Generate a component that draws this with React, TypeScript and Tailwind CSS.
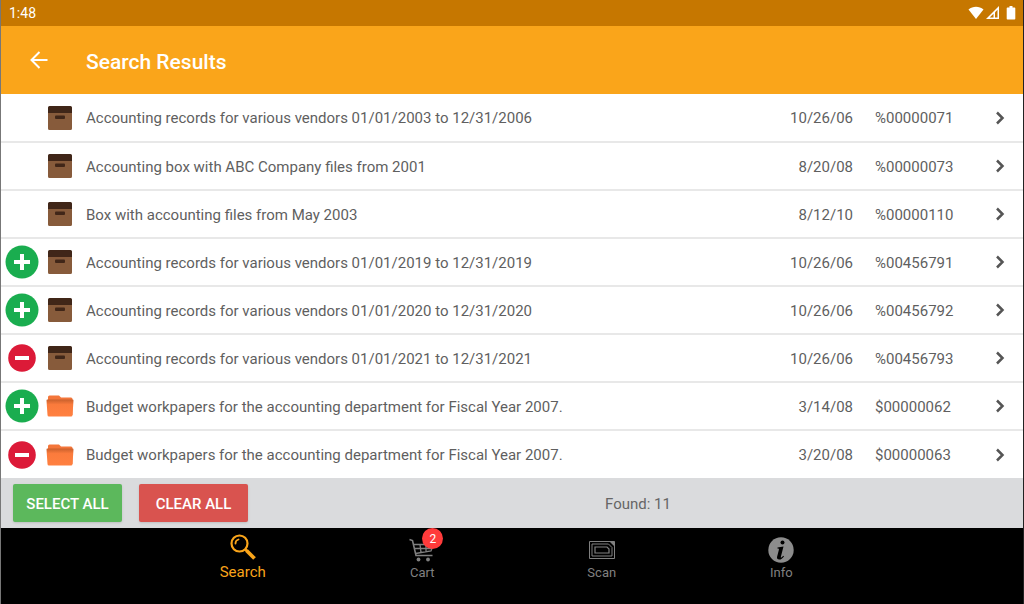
import React from "react";

type Kind = "box" | "folder";
type Action = "add" | "remove" | null;

interface Result {
  title: string;
  date: string;
  code: string;
  kind: Kind;
  action: Action;
}

const results: Result[] = [
  { title: "Accounting records for various vendors 01/01/2003 to 12/31/2006", date: "10/26/06", code: "%00000071", kind: "box", action: null },
  { title: "Accounting box with ABC Company files from 2001", date: "8/20/08", code: "%00000073", kind: "box", action: null },
  { title: "Box with accounting files from May 2003", date: "8/12/10", code: "%00000110", kind: "box", action: null },
  { title: "Accounting records for various vendors 01/01/2019 to 12/31/2019", date: "10/26/06", code: "%00456791", kind: "box", action: "add" },
  { title: "Accounting records for various vendors 01/01/2020 to 12/31/2020", date: "10/26/06", code: "%00456792", kind: "box", action: "add" },
  { title: "Accounting records for various vendors 01/01/2021 to 12/31/2021", date: "10/26/06", code: "%00456793", kind: "box", action: "remove" },
  { title: "Budget workpapers for the accounting department for Fiscal Year 2007.", date: "3/14/08", code: "$00000062", kind: "folder", action: "add" },
  { title: "Budget workpapers for the accounting department for Fiscal Year 2007.", date: "3/20/08", code: "$00000063", kind: "folder", action: "remove" },
];

function BoxIcon() {
  return (
    <svg width="26" height="26" viewBox="0 0 26 26" aria-hidden="true">
      <path d="M1 6h24v17.500a1.500 1.500 0 0 1-1.500 1.500h-21a1.500 1.500 0 0 1-1.500-1.500z" fill="#875b3b" />
      <path d="M2.500 1h21a1.500 1.500 0 0 1 1.500 1.500V8H1V2.500A1.500 1.500 0 0 1 2.500 1z" fill="#402618" />
      <rect x="8" y="10.500" width="10" height="3.500" rx="1" fill="#402618" />
    </svg>
  );
}

function FolderIcon() {
  return (
    <svg width="28" height="22" viewBox="0 0 28 22" aria-hidden="true">
      <defs>
        <linearGradient id="folder-front" x1="0" y1="0" x2="0" y2="1">
          <stop offset="0" stopColor="#c9602c" />
          <stop offset="0.300" stopColor="#fb7b3c" />
          <stop offset="1" stopColor="#ff8040" />
        </linearGradient>
      </defs>
      <path d="M2 20V2a1.500 1.500 0 0 1 1.500-1.500H13L15 2.500h10a1.500 1.500 0 0 1 1.500 1.500v16z" fill="#f4763a" />
      <path d="M1.500 4.500h25a1 1 0 0 1 1 1.100L26.500 20a1.500 1.500 0 0 1-1.500 1.500H3A1.500 1.500 0 0 1 1.500 20L.5 5.600a1 1 0 0 1 1-1.100z" fill="url(#folder-front)" />
    </svg>
  );
}

function AddIcon() {
  return (
    <svg width="34" height="34" viewBox="0 0 34 34" aria-hidden="true">
      <circle cx="17" cy="17" r="16.500" fill="#1aad4f" />
      <path d="M17 9v16M9 17h16" stroke="#fff" strokeWidth="4" />
    </svg>
  );
}

function RemoveIcon() {
  return (
    <svg width="28" height="28" viewBox="0 0 28 28" aria-hidden="true">
      <circle cx="14" cy="14" r="13.800" fill="#dc1a38" />
      <path d="M7 14h14" stroke="#fff" strokeWidth="4" />
    </svg>
  );
}

function StatusIcons() {
  return (
    <svg width="48" height="16" viewBox="0 0 48 16" aria-hidden="true">
      <path d="M0.500 4.500C4.800 0.900 11.200 0.900 15.500 4.500L8 14z" fill="#fff" />
      <path d="M31 1v13H18z" fill="#fff" />
      <path d="M29.500 4.700v7.800h-2.500V7.200z" fill="#c67700" />
      <path d="M25.500 8.700v3.800h-3.800z" fill="#c67700" />
      <path d="M39.500 2.500h2V1h3v1.500h2a.8.8 0 0 1 .8.800v10.400a.8.800 0 0 1-.8.800h-7a.8.800 0 0 1-.8-.800V3.300a.8.800 0 0 1 .8-.800z" fill="#fff" />
    </svg>
  );
}

function SearchIcon() {
  return (
    <svg width="26" height="26" viewBox="0 0 26 26" fill="none" stroke="currentColor" aria-hidden="true">
      <circle cx="9.500" cy="9.500" r="8" strokeWidth="2.200" />
      <path d="M15 15l2 2" strokeWidth="2.500" />
      <path d="M16.500 16.500l8 8" strokeWidth="3.800" />
      <path d="M5.500 9.500a4 4 0 0 1 3-4" strokeWidth="1.800" strokeLinecap="round" />
    </svg>
  );
}

function CartIcon() {
  return (
    <svg width="26" height="24" viewBox="0 0 26 24" fill="none" stroke="currentColor" aria-hidden="true">
      <path d="M.5 1.500l3 1 3.500 15h16.500" strokeWidth="1.600" />
      <path d="M4.500 6.500h20l-2.500 6.500-15.500 2.500M5.500 10.500h17.500M11 6.500l1 8M17 6.500v7" strokeWidth="1.300" />
      <circle cx="9.500" cy="21.500" r="1.900" fill="currentColor" stroke="none" />
      <circle cx="19" cy="21.500" r="1.900" fill="currentColor" stroke="none" />
    </svg>
  );
}

function ScanIcon() {
  return (
    <svg width="26" height="18" viewBox="0 0 26 18" fill="none" stroke="currentColor" aria-hidden="true">
      <path d="M.5.5h25v17H.5z" />
      <path d="M3 3h16.500l3.500 3.500V15H3z" />
      <path d="M6 6h12l2 2v4H6z" strokeWidth="1.200" />
      <path d="M20.500.5h5v5z" fill="currentColor" stroke="none" />
    </svg>
  );
}

function InfoIcon() {
  return (
    <svg width="26" height="26" viewBox="0 0 26 26" aria-hidden="true">
      <circle cx="13" cy="13" r="12.700" fill="#8c8c8c" />
      <circle cx="14.500" cy="5.500" r="2" fill="#000" />
      <path d="M9.500 10.500l6-1-2.700 10.500c-.2 1 .6.900 2.500-1.200l.7.600c-1.500 2-3 3.100-4.700 3.100-2 0-2.600-1.100-2.200-2.700l1.800-7c.2-.9-.2-1.300-1.500-1.300z" fill="#000" />
    </svg>
  );
}

const navItems = [
  { label: "Search", Icon: SearchIcon, active: true, badge: 0 },
  { label: "Cart", Icon: CartIcon, active: false, badge: 2 },
  { label: "Scan", Icon: ScanIcon, active: false, badge: 0 },
  { label: "Info", Icon: InfoIcon, active: false, badge: 0 },
];

export default function App() {
  return (
    <div className="flex min-h-screen flex-col border-x border-r-[#222222] border-l-[#777777] bg-black font-['Roboto',sans-serif]">
      <div className="flex h-[26px] items-center justify-between bg-[#c67700] pr-[7px] pl-2 text-sm text-white">
        <span>1:48</span>
        <StatusIcons />
      </div>

      <header className="flex h-[68px] items-center bg-[#faa51a] text-white">
        <button type="button" aria-label="Back" className="ml-6 flex h-8 w-7 items-center justify-center">
          <svg width="18" height="18" viewBox="0 0 18 18" fill="none" stroke="currentColor" strokeWidth="2" aria-hidden="true">
            <path d="M17.500 9H2M9.500 1L1.500 9l8 8" />
          </svg>
        </button>
        <h1 className="ml-[33px] pt-1 text-[21px] leading-7 font-medium">Search Results</h1>
      </header>

      <main className="bg-white">
        <table className="w-full table-fixed border-collapse text-[15px] text-[#5f5f5f]">
          <colgroup>
            <col className="w-[42px]" />
            <col className="w-[43px]" />
            <col />
            <col className="w-[100px]" />
            <col className="w-[124px]" />
            <col className="w-[46px]" />
          </colgroup>
          <tbody>
            {results.map((item) => (
              <tr key={item.code} className="h-12 border-b-2 border-[#e8e8e8] last:border-b-0">
                <td className="p-0">
                  {item.action && (
                    <button type="button" aria-label={item.action === "add" ? "Add to cart" : "Remove from cart"} className="flex w-full items-center justify-center">
                      {item.action === "add" ? <AddIcon /> : <RemoveIcon />}
                    </button>
                  )}
                </td>
                <td className="p-0">
                  <div className="flex w-[34px] justify-center">{item.kind === "box" ? <BoxIcon /> : <FolderIcon />}</div>
                </td>
                <td className="truncate p-0 pt-0.5">{item.title}</td>
                <td className="p-0 pt-0.5 text-right">{item.date}</td>
                <td className="p-0 pt-0.5 pl-[22px]">{item.code}</td>
                <td className="p-0">
                  <button type="button" aria-label="Open" className="flex w-full items-center justify-center">
                    <svg width="10" height="14" viewBox="0 0 10 14" fill="none" stroke="#555555" strokeWidth="2.500" aria-hidden="true">
                      <path d="M2 1.500L7.500 7 2 12.500" />
                    </svg>
                  </button>
                </td>
              </tr>
            ))}
          </tbody>
        </table>
      </main>

      <div className="grid h-[50px] grid-cols-[1fr_auto_1fr] items-center bg-[#dadbdd] px-3 text-[15px]">
        <div className="flex gap-[17px]">
          <button type="button" className="h-[38px] w-[109px] rounded-xs bg-[#5cb85c] pt-0.5 font-medium text-white shadow-sm">SELECT ALL</button>
          <button type="button" className="h-[38px] w-[109px] rounded-xs bg-[#d9534f] pt-0.5 font-medium text-white shadow-sm">CLEAR ALL</button>
        </div>
        <p className="ml-[252px] pt-0.5 text-[#666666]">Found: 11</p>
      </div>

      <nav className="flex-1 bg-black">
        <div className="mx-auto grid max-w-[718px] grid-cols-4">
          {navItems.map(({ label, Icon, active, badge }) => (
            <a key={label} href={`#${label.toLowerCase()}`} className={active ? "flex flex-col items-center pt-[5px] text-[15px]/[22px] text-[#faa51a]" : "flex flex-col items-center pt-2 text-[13px]/[18px] text-[#808080]"}>
              <span className="relative flex h-7 items-center">
                <Icon />
                {badge > 0 && (
                  <span className="absolute -top-2 -right-2 flex size-[21px] items-center justify-center rounded-full bg-[#ff3b3b] text-xs text-white">{badge}</span>
                )}
              </span>
              <span>{label}</span>
            </a>
          ))}
        </div>
      </nav>
    </div>
  );
}
